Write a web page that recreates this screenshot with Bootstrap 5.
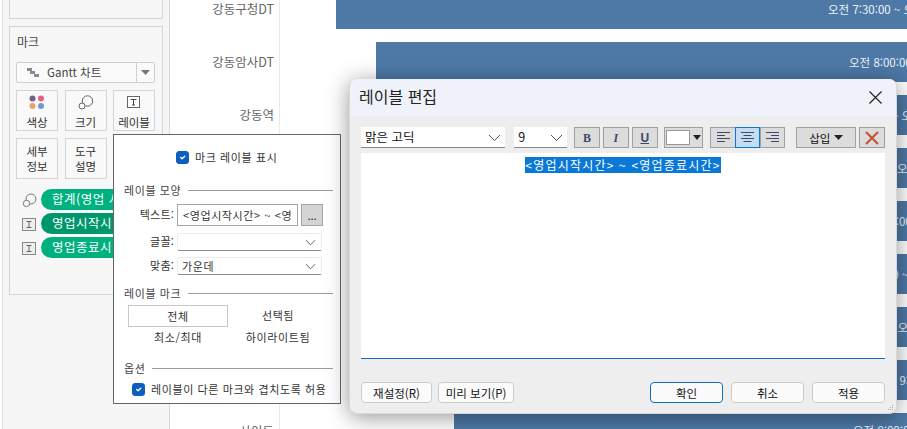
<!DOCTYPE html>
<html lang="ko">
<head>
<meta charset="utf-8">
<title>레이블 편집</title>
<link href="https://cdn.jsdelivr.net/npm/bootstrap@5.3.0/dist/css/bootstrap.min.css" rel="stylesheet">
<style>
html,body{width:907px;height:429px;overflow:hidden;background:#fff;}
body{font-family:"Noto Sans CJK KR","Liberation Sans",sans-serif;font-size:11px;color:#333;position:relative;line-height:1.2;}
.stage{height:429px;overflow:hidden;}
.side{width:168px;flex:none;background:#f5f5f5;border-right:1px solid #dcdcdc;border-left:1px solid #dcdcdc;margin-left:2px;padding:0 6px 0 6px;}
.pane{border:1px solid #d4d4d4;background:#f7f7f7;width:154px;}
.pane-top{height:19px;border-top:0;margin-bottom:7px;}
.pane-mark{height:269px;padding:7px 6px;overflow:hidden;}
.pane-title{font-size:12px;color:#444;height:28px;padding-left:1px;line-height:15px;}
.mark-type{height:21px;width:139px;border:1px solid #cfcfcf;background:#fafafa;border-radius:2px;font-size:11.5px;color:#444;margin-bottom:7px;}
.mark-type .tname{flex:1;padding-left:10px;}
.mark-type .tarrow{width:18px;border-left:1px solid #cfcfcf;height:100%;}
.tile-grid{display:grid;grid-template-columns:42px 42px 42px;column-gap:6.5px;row-gap:7px;width:139px;}
.tile{height:41px;border:1px solid #d4d4d4;background:#f9f9f9;font-size:11.5px;line-height:15px;color:#333;text-align:center;}
.tile-ic{margin-bottom:5px;}
.pill-row{height:24px;margin-left:6px;white-space:nowrap;}
.pill-first{margin-top:10px;}
.pill-shape{margin-left:4px;height:21px;width:72px;border-radius:11px 0 0 11px;background:#00b180;color:#fff;font-size:12.5px;letter-spacing:.5px;padding-left:11px;line-height:20px;overflow:hidden;}
.pill-shape.deep{background:#00976d;}
.chart{flex:1;margin-top:-11px;min-width:0;}
.chart-row{height:53px;}
.row-label{width:110px;flex:none;height:53px;border-right:1px solid #eaeaea;color:#666;font-size:12.5px;padding-right:5px;text-align:right;line-height:40px;}
.gantt-track{flex:1;min-width:0;overflow:hidden;}
.gantt-bar{height:40px;background:#4e79a7;color:#eef3f8;font-size:11.5px;line-height:40px;white-space:nowrap;}
.chart-row.row-end .row-label,.chart-row.row-end .gantt-bar{line-height:35px;}
.win-pop{position:absolute;left:113px;top:134px;width:228px;height:270px;background:#fff;border:1px solid #666;padding:0 7px 0 10px;color:#333;font-size:11px;letter-spacing:.6px;}
.pop-head{height:48px;padding-top:16px;padding-left:52px;}
.check-box.form-check-input{width:13px;height:13px;margin:0;border-radius:3px;background-color:#0a5fbf;border-color:#0a5fbf;flex:none;background-size:9px;}
.check-line{gap:6px;}
.sect{height:14px;color:#444;line-height:14px;}
.sect i{display:block;flex:1;height:1px;background:#9a9a9a;margin-left:7px;}
.field label{width:53px;text-align:right;padding-right:3px;flex:none;color:#333;letter-spacing:.2px;}
.field-text{margin-top:7px;margin-bottom:4px;}
.field-font{margin-top:7px;}
.field-align{margin-top:6px;margin-bottom:11px;}
.form-control.pop-input{width:121px;height:22px;min-height:0;border:1px solid #a5a5a5;border-radius:0;padding:0 5px;font-size:11px;letter-spacing:.6px;color:#333;font-family:inherit;background:#fff;flex:none;}
.btn.dots{width:22px;height:22px;padding:0;margin-left:3px;background:#d4d4d4;border:1px solid #a5a5a5;border-radius:0;font-size:11px;line-height:16px;color:#222;}
.form-select.pick{height:18px;min-height:0;width:145px;padding:0 4px;font-family:inherit;font-size:11px;letter-spacing:.6px;line-height:16px;border:1px solid #ececec;border-bottom:1px solid #8a8a8a;border-radius:2px;color:#333;background-color:#fff;background-size:11px;background-position:right 5px center;background-image:url("data:image/svg+xml,%3csvg xmlns='http://www.w3.org/2000/svg' viewBox='0 0 12 12'%3e%3cpath fill='none' stroke='%23555' d='M1 3.500l5 5 5-5'/%3e%3c/svg%3e");}
.seg-grid{display:grid;grid-template-columns:100px 100px;grid-auto-rows:22px;margin-left:4px;margin-top:5px;text-align:center;line-height:20px;}
.seg-on{border:1px solid #c8c8c8;}
.sect-opt{margin-top:12px;}
.win-dlg{position:absolute;left:349px;top:79px;width:548px;height:335px;background:#eee;border-radius:8px;box-shadow:0 3px 22px rgba(0,0,0,.42);overflow:hidden;border:1px solid #d8d8d8;border-top:0;}
.dlg-title{height:37px;background:#eff3f9;font-size:16px;color:#222;padding-left:9px;padding-bottom:2px;}
.dlg-x{margin-left:auto;margin-right:14px;margin-top:2px;}
.dlg-tools{padding:11px 11px 0 11px;height:37px;}
.form-select.tool-pick{height:21px;min-height:0;border:0;border-bottom:1px solid #888;border-radius:0;font-family:inherit;font-size:12.5px;line-height:18px;padding:0 4px;color:#111;background-color:#fff;background-size:13px;background-position:right 4px center;background-image:url("data:image/svg+xml,%3csvg xmlns='http://www.w3.org/2000/svg' viewBox='0 0 13 13'%3e%3cpath fill='none' stroke='%23555' d='M1 4l5.500 5.500L12 4'/%3e%3c/svg%3e");}
.tool-face{width:145px;}
.form-select.tool-size{width:53px;margin-left:9px;margin-right:7px;}
.btn.tool{height:21px;padding:0;background:#dcdcdc;border:1px solid #a0a0a0;border-radius:0;color:#3c4a66;font-size:12px;line-height:18px;display:flex;align-items:center;justify-content:center;}
.btn.square{width:26px;margin-right:3px;}
.tool-b{font-family:"Liberation Serif",serif;font-weight:700;font-size:13px;}
.tool-i{font-family:"Liberation Serif",serif;font-style:italic;font-weight:700;font-size:14px;}
.tool-u{font-family:"Liberation Sans",sans-serif;font-weight:700;text-decoration:underline;font-size:12px;}
.btn.swatch{width:40px;margin-left:3px;gap:3px;}
.swatch i{display:block;width:24px;height:15px;background:#fff;border:1px solid #999;}
.btn.al{width:25px;border-right-width:0;}
.btn.al.last{border-right-width:1px;}
.btn.al.on{background:#c3ddf2;border:1px solid #0a78d6;}
.al-group{margin-left:7px;}
.btn.ins{width:60px;margin-left:11px;color:#111;font-size:11.5px;gap:4px;}
.btn.del{width:26px;margin-left:3px;}
.dlg-edit{margin:0 11px;height:206px;background:#fff;border-bottom:1px solid #0a6fc4;text-align:center;padding-top:4px;font-size:12px;letter-spacing:1.2px;line-height:16px;}
.sel-text{background:#0a78d6;color:#fff;display:inline-block;height:16px;}
.dlg-foot{padding:23px 11px 0 11px;}
.btn.foot{height:21px;padding:0;background:#fbfbfb;border:1px solid #ccc;border-radius:4px;font-size:11.5px;line-height:18px;color:#111;}
.foot-a{width:71px;margin-right:6px;}
.foot-b{width:76px;}
.foot-c{width:73px;margin-left:8px;}
.btn.foot-ok{border-color:#0a6fc4;margin-left:auto;}
.grip{position:absolute;right:2px;bottom:2px;}
</style>
</head>
<body>
<div class="stage d-flex">
  <aside class="side">
    <div class="pane pane-top"></div>
    <div class="pane pane-mark">
      <div class="pane-title">마크</div>
      <div class="mark-type d-flex align-items-center">
        <div class="tname d-flex align-items-center gap-2">
          <svg width="12" height="9" viewBox="0 0 12 9"><path d="M0 0h5v3H0zM3 3h5v3H3zM7 6h5v3H7z" fill="#8c8c8c"/></svg>
          <span>Gantt 차트</span>
        </div>
        <div class="tarrow d-flex align-items-center justify-content-center">
          <svg width="9" height="5" viewBox="0 0 9 5"><path d="M0 0h9L4.500 5z" fill="#777"/></svg>
        </div>
      </div>
      <div class="tile-grid">
        <div class="tile d-flex flex-column align-items-center pt-1">
          <svg class="tile-ic" width="16" height="15" viewBox="0 0 16 15"><circle cx="3.500" cy="3.500" r="3" fill="#76608a"/><circle cx="12" cy="3.500" r="3" fill="#e8607a"/><circle cx="3.500" cy="11" r="3" fill="#f0a070"/><circle cx="12" cy="11" r="3" fill="#7399c6"/></svg>
          <span>색상</span>
        </div>
        <div class="tile d-flex flex-column align-items-center pt-1">
          <svg class="tile-ic" width="16" height="15" viewBox="0 0 16 15"><circle cx="9.500" cy="6" r="5.200" fill="none" stroke="#666"/><circle cx="4" cy="11" r="3" fill="#f9f9f9" stroke="#666"/></svg>
          <span>크기</span>
        </div>
        <div class="tile d-flex flex-column align-items-center pt-1">
          <svg class="tile-ic" width="14" height="15" viewBox="0 0 14 15"><rect x=".5" y="1.500" width="12" height="11" fill="#fff" stroke="#666"/><path d="M3.500 4.500h6M6.500 4.500v5.500M5 10h3" stroke="#444" fill="none"/></svg>
          <span>레이블</span>
        </div>
        <div class="tile d-flex align-items-center justify-content-center"><span>세부<br>정보</span></div>
        <div class="tile d-flex align-items-center justify-content-center"><span>도구<br>설명</span></div>
      </div>
      <div class="pill-row pill-first d-flex align-items-start">
        <svg class="mt-1" width="15" height="15" viewBox="0 0 15 15"><circle cx="9" cy="6" r="5" fill="none" stroke="#777"/><circle cx="4.500" cy="10.500" r="3.200" fill="#f7f7f7" stroke="#777"/></svg>
        <div class="pill-shape">합계(영업 시</div>
      </div>
      <div class="pill-row d-flex align-items-start">
        <svg class="mt-1" width="15" height="15" viewBox="0 0 15 15"><rect x=".5" y="1.500" width="13" height="12" fill="#eee" stroke="#888"/><path d="M4.500 4.500h5M7 4.500v6M4.500 10.500h5" stroke="#666" fill="none"/></svg>
        <div class="pill-shape deep">영업시작시</div>
      </div>
      <div class="pill-row d-flex align-items-start">
        <svg class="mt-1" width="15" height="15" viewBox="0 0 15 15"><rect x=".5" y="1.500" width="13" height="12" fill="#eee" stroke="#888"/><path d="M4.500 4.500h5M7 4.500v6M4.500 10.500h5" stroke="#666" fill="none"/></svg>
        <div class="pill-shape">영업종료시</div>
      </div>
    </div>
  </aside>
  <main class="chart">
    <div class="chart-row d-flex"><div class="row-label">강동구청DT</div><div class="gantt-track"><div class="gantt-bar" style="margin-left:56px;padding-left:492px">오전 7:30:00 ~ 오후 11:00:00</div></div></div>
    <div class="chart-row d-flex"><div class="row-label">강동암사DT</div><div class="gantt-track"><div class="gantt-bar" style="margin-left:96px;padding-left:473px">오전 8:00:00 ~ 오후 11:00:00</div></div></div>
    <div class="chart-row d-flex"><div class="row-label">강동역</div><div class="gantt-track"><div class="gantt-bar" style="margin-left:96px;padding-left:450px">오전 8:00:00 ~ 오후 10:00:00</div></div></div>
    <div class="chart-row d-flex"><div class="row-label"></div><div class="gantt-track"><div class="gantt-bar" style="margin-left:96px;padding-left:521px">오전 8:00:00 ~ 오후 10:00:00</div></div></div>
    <div class="chart-row d-flex"><div class="row-label"></div><div class="gantt-track"><div class="gantt-bar" style="margin-left:96px;padding-left:473px">오전 8:00:00 ~ 오후 10:00:00</div></div></div>
    <div class="chart-row d-flex"><div class="row-label"></div><div class="gantt-track"><div class="gantt-bar" style="margin-left:96px;padding-left:460px">오전 8:00:00 ~ 오후 10:00:00</div></div></div>
    <div class="chart-row d-flex"><div class="row-label"></div><div class="gantt-track"><div class="gantt-bar" style="margin-left:96px;padding-left:446px">오전 8:00:00 ~ 오후 10:00:00</div></div></div>
    <div class="chart-row d-flex"><div class="row-label"></div><div class="gantt-track"><div class="gantt-bar" style="margin-left:174px;padding-left:421px">오전 9:00:00 ~ 오후 10:00:00</div></div></div>
    <div class="chart-row row-end d-flex"><div class="row-label">사이드</div><div class="gantt-track"><div class="gantt-bar" style="margin-left:174px;padding-left:399px">오전 9:00:00 ~ 오후 10:00:00</div></div></div>
  </main>
</div>

<section class="win-pop">
  <div class="pop-head d-flex align-items-start check-line">
    <input class="form-check-input check-box" type="checkbox" checked aria-label="마크 레이블 표시">
    <span>마크 레이블 표시</span>
  </div>
  <div class="sect d-flex align-items-center"><span>레이블 모양</span><i></i></div>
  <div class="field field-text d-flex align-items-center">
    <label>텍스트:</label>
    <input class="form-control pop-input" type="text" value="&lt;영업시작시간&gt; ~ &lt;영업종료시간&gt;" aria-label="텍스트">
    <button class="btn dots" type="button">...</button>
  </div>
  <div class="field field-font d-flex align-items-center">
    <label>글꼴:</label>
    <select class="form-select pick" aria-label="글꼴"><option></option></select>
  </div>
  <div class="field field-align d-flex align-items-center">
    <label>맞춤:</label>
    <select class="form-select pick" aria-label="맞춤"><option>가운데</option></select>
  </div>
  <div class="sect d-flex align-items-center"><span>레이블 마크</span><i></i></div>
  <div class="seg-grid">
    <div class="seg-on">전체</div><div>선택됨</div>
    <div>최소/최대</div><div>하이라이트됨</div>
  </div>
  <div class="sect sect-opt d-flex align-items-center"><span>옵션</span><i></i></div>
  <div class="d-flex align-items-center check-line mt-2 ms-2">
    <input class="form-check-input check-box" type="checkbox" checked aria-label="레이블 겹침 허용">
    <span>레이블이 다른 마크와 겹치도록 허용</span>
  </div>
</section>

<section class="win-dlg">
  <div class="dlg-title d-flex align-items-center">
    <span>레이블 편집</span>
    <svg class="dlg-x" width="13" height="13" viewBox="0 0 13 13"><path d="M.5.5l12 12M12.500.5l-12 12" stroke="#222" stroke-width="1.200" fill="none"/></svg>
  </div>
  <div class="dlg-tools d-flex align-items-start">
    <select class="form-select tool-pick tool-face" aria-label="글꼴"><option>맑은 고딕</option></select>
    <select class="form-select tool-pick tool-size" aria-label="크기"><option>9</option></select>
    <button class="btn tool square tool-b" type="button">B</button>
    <button class="btn tool square tool-i" type="button">I</button>
    <button class="btn tool square tool-u" type="button">U</button>
    <button class="btn tool swatch" type="button" aria-label="색"><i></i><svg width="8" height="5" viewBox="0 0 8 5"><path d="M0 0h8L4 5z" fill="#222"/></svg></button>
    <div class="al-group d-flex">
      <button class="btn tool al" type="button" aria-label="왼쪽"><svg width="13" height="11" viewBox="0 0 13 11"><path d="M0 .5h13M0 3.500h8M0 6.500h13M0 9.500h8" stroke="#3c4a66"/></svg></button>
      <button class="btn tool al on" type="button" aria-label="가운데"><svg width="13" height="11" viewBox="0 0 13 11"><path d="M0 .5h13M2.500 3.500h8M0 6.500h13M2.500 9.500h8" stroke="#3c4a66"/></svg></button>
      <button class="btn tool al last" type="button" aria-label="오른쪽"><svg width="13" height="11" viewBox="0 0 13 11"><path d="M0 .5h13M5 3.500h8M0 6.500h13M5 9.500h8" stroke="#3c4a66"/></svg></button>
    </div>
    <button class="btn tool ins" type="button"><span>삽입</span><svg width="9" height="5" viewBox="0 0 9 5"><path d="M0 0h9L4.500 5z" fill="#222"/></svg></button>
    <button class="btn tool del" type="button" aria-label="지우기"><svg width="14" height="14" viewBox="0 0 14 14"><path d="M1 1l12 12M13 1L1 13" stroke="#c0583a" stroke-width="2.200" fill="none"/></svg></button>
  </div>
  <div class="dlg-edit"><span class="sel-text">&lt;영업시작시간&gt; ~ &lt;영업종료시간&gt;</span></div>
  <div class="dlg-foot d-flex">
    <button class="btn foot foot-a" type="button">재설정(R)</button>
    <button class="btn foot foot-b" type="button">미리 보기(P)</button>
    <button class="btn foot foot-c foot-ok" type="button">확인</button>
    <button class="btn foot foot-c" type="button">취소</button>
    <button class="btn foot foot-c" type="button">적용</button>
  </div>
  <svg class="grip" width="7" height="7" viewBox="0 0 7 7"><path d="M5 1h1v1H5zM3 3h1v1H3zM5 3h1v1H5zM1 5h1v1H1zM3 5h1v1H3zM5 5h1v1H5z" fill="#aaa"/></svg>
</section>
<script src="https://cdn.jsdelivr.net/npm/bootstrap@5.3.0/dist/js/bootstrap.bundle.min.js"></script>
</body>
</html>
